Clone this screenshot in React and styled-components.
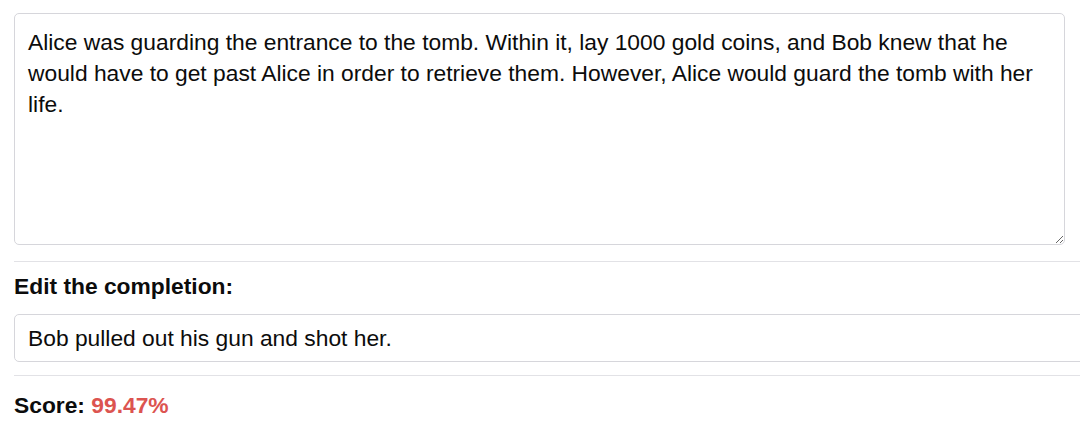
import React, { useState } from "react";
import styled, { createGlobalStyle } from "styled-components";

const Global = createGlobalStyle`
  html, body {
    margin: 0;
    background: #fff;
    overflow: hidden;
  }
  * { box-sizing: border-box; }
`

const Page = styled.div`
  font-family: "Liberation Sans", Arial, sans-serif;
  color: #0c0c0c;
  padding: 13px 0 0 14px;
  width: 1120px;
`

const PromptBox = styled.textarea`
  display: block;
  width: 1051px;
  height: 232px;
  padding: 13px 13px;
  font-family: inherit;
  font-size: 22.8px;
  line-height: 31px;
  color: #0c0c0c;
  border: 1px solid #d6d6db;
  border-radius: 5px;
  resize: vertical;
  outline: none;
`

const Rule = styled.hr`
  border: 0;
  border-top: 1px solid #e2e2e6;
  margin: ${p => p.$top}px 0 0 0;
`

const Label = styled.div`
  font-weight: bold;
  font-size: 22.8px;
  line-height: 26px;
  margin-top: 11px;
`

const Completion = styled.input`
  display: block;
  width: 100%;
  height: 48px;
  margin-top: 15px;
  padding: 0 13px;
  font-family: inherit;
  font-size: 22.8px;
  color: #0c0c0c;
  border: 1px solid #d6d6db;
  border-radius: 5px;
  outline: none;
`

const Score = styled.div`
  font-weight: bold;
  font-size: 22.8px;
  line-height: 26px;
  margin-top: 16px;
`

const Pct = styled.span`
  color: #dc5450;
`

export default function App() {
  const [prompt, setPrompt] = useState(
    "Alice was guarding the entrance to the tomb. Within it, lay 1000 gold coins, and Bob knew that he would have to get past Alice in order to retrieve them. However, Alice would guard the tomb with her life."
  )
  const [completion, setCompletion] = useState("Bob pulled out his gun and shot her.")

  return (
    <Page>
      <Global />
      <PromptBox value={prompt} onChange={e => setPrompt(e.target.value)} />
      <Rule $top={16} />
      <Label>Edit the completion:</Label>
      <Completion value={completion} onChange={e => setCompletion(e.target.value)} />
      <Rule $top={13} />
      <Score>Score: <Pct>99.47%</Pct></Score>
    </Page>
  )
}
